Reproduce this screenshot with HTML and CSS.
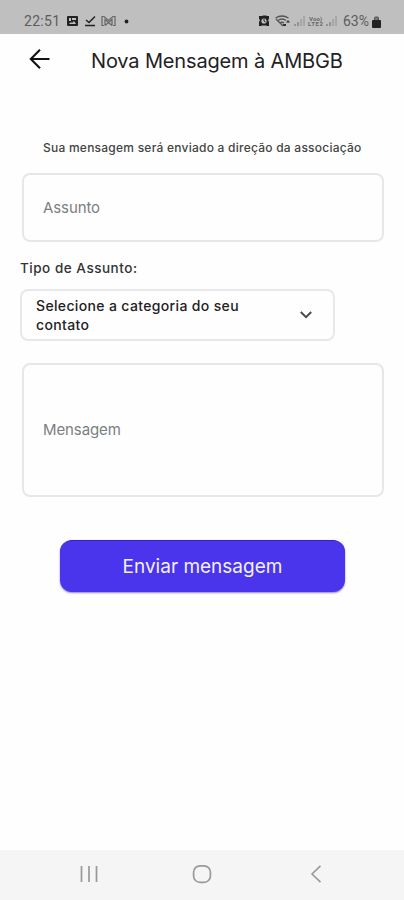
FILE: index.html
```
<!DOCTYPE html>
<html lang="pt-BR">
<head>
<meta charset="utf-8">
<title>Nova Mensagem à AMBGB</title>
<link rel="stylesheet" href="styles.css">
</head>
<body>
<div class="screen">
  <div class="status">
    <span class="clock">22:51</span>
    <svg class="notices" width="66" height="14" viewBox="0 0 66 14">
      <path fill="#222" fill-rule="evenodd" d="M2 2h9q1 0 1 1v8q0 1-1 1H2q-1 0-1-1V3q0-1 1-1zM3 4v3h2V4zM6 4v2h4V4zM3 10h7L8 7 6 9 5 8z"/>
      <path fill="none" stroke="#222" stroke-width="1.500" d="M20 6l3 2.500L29 2.500M19 11.500h10"/>
      <g fill="none" stroke="#666" stroke-width="1.200"><path d="M38 11.500H36V2.500h2l4.500 4L47 2.500h2v9h-2M39 11.500V5.500l3.500 3L46 5.500v6M39 11.500l3.500-3 3.500 3"/></g>
      <circle cx="60.500" cy="7.500" r="1.900" fill="#222"/>
    </svg>
    <svg class="signals" width="82" height="14" viewBox="0 0 82 14">
      <path fill="#222" d="M1 2h3l1-.5h3L9 2h2v3l-1 1 1 2v4H9l-1-.5H4L3 12H1V8l1-2-1-1z"/>
      <circle cx="6" cy="7" r="2.600" fill="#bfbfbf"/><path d="M6 5v2l1.500 1" stroke="#222" fill="none"/>
      <g fill="none" stroke="#555" stroke-width="1.300"><path d="M17.500 4Q24 0 30.500 4M20 6.500q4-3 8 0M22 9q2-1.500 4 0M18 5l7 7"/></g>
      <path fill="#333" d="M30 6l2 2.500h-4zM25 10h3v2h-3z"/>
      <path stroke="#888" stroke-width="1.600" d="M37 12v-2M40 12V8"/><path stroke="#a0a0a0" stroke-width="1.600" d="M43 12V5M46 12V2"/>
      <text x="51" y="6.500" class="lte" textLength="13">Voo)</text><text x="50" y="12" class="lte" textLength="15">LTE2</text>
      <path stroke="#888" stroke-width="1.600" d="M69 12v-2M72 12V8"/><path stroke="#a0a0a0" stroke-width="1.600" d="M75 12V5M78 12V2"/>
    </svg>
    <span class="percent">63%</span>
    <svg class="battery" width="9" height="13" viewBox="0 0 9 13"><path fill="#222" d="M1 5h7q1 0 1 1v6q0 1-1 1H1q-1 0-1-1V6q0-1 1-1z"/><path fill="#777" stroke="#555" d="M2.500 5V3q0-1 1-1h2q1 0 1 1v2"/></svg>
  </div>
  <header class="header">
    <svg class="back" width="22" height="22" viewBox="0 0 22 22"><path d="M20.500 11H2M11 1.800L1.800 11l9.200 9.200" fill="none" stroke="#111" stroke-width="2.100"/></svg>
    <h1 class="title">Nova Mensagem à AMBGB</h1>
  </header>
  <main class="form">
    <p class="hint">Sua mensagem será enviado a direção da associação</p>
    <div class="field subject">Assunto</div>
    <div class="label">Tipo de Assunto:</div>
    <div class="select">
      <div class="choice">Selecione a categoria do seu<br>contato</div>
      <svg width="14" height="10" viewBox="0 0 14 10"><path d="M1.800 2L7 7.200 12.200 2" fill="none" stroke="#4a4a4a" stroke-width="2"/></svg>
    </div>
    <div class="field message">Mensagem</div>
    <div class="button">Enviar mensagem</div>
  </main>
  <nav class="nav">
    <svg width="18" height="20" viewBox="0 0 18 20"><path d="M1.500 2v16M9 2v16M16.500 2v16" stroke="#999" stroke-width="1.700"/></svg>
    <svg class="home" width="20" height="20" viewBox="0 0 20 20"><rect x="1.600" y="1.800" width="16.800" height="16.600" rx="6.500" fill="none" stroke="#999" stroke-width="1.700"/></svg>
    <svg width="12" height="20" viewBox="0 0 12 20"><path d="M10.500 1.800L2 10l8.500 8.200" fill="none" stroke="#999" stroke-width="1.600"/></svg>
  </nav>
</div>
</body>
</html>
```
FILE: styles.css
```
* { box-sizing: border-box; }
body { margin: 0; background: #fff; font-family: Inter, "Open Sans", sans-serif; }
svg { display: block; flex: none; }
.screen { width: 404px; height: 900px; display: flex; flex-direction: column; background: #fefefe; overflow: hidden; }
.status { height: 34px; flex: none; background: #bfbfbf; display: flex; align-items: center; padding: 8px 23px 0 24px; color: #5c5c5c; font: 14px/16px Roboto, sans-serif; }
.clock { width: 42px; letter-spacing: 0.3px; }
.signals { margin-left: auto; }
.lte { font: bold 6px Roboto, sans-serif; fill: #666; }
.percent { width: 29px; margin-left: 3px; }
.header { height: 56px; flex: none; display: flex; align-items: flex-start; padding: 14px 0 0 29px; }
.title { margin: 0 0 0 40px; font-size: 20px; line-height: 26px; font-weight: 400; letter-spacing: -0.15px; color: #222; white-space: nowrap; }
.form { flex: 1; padding: 48px 20px 0; }
.hint { margin: 0 0 15px 23px; font-size: 12px; line-height: 20px; letter-spacing: 0.24px; color: #444; white-space: nowrap; font-weight: 500; }
.field { margin: 0 1px 0 2px; border: 2px solid #e6e7eb; border-radius: 8px; display: flex; align-items: center; padding-left: 19px; font-size: 15px; letter-spacing: -0.1px; color: #7b7f82; width: 362px; }
.subject { height: 69px; }
.label { margin-top: 16px; height: 20px; font-size: 13.500px; line-height: 20px; font-weight: 500; letter-spacing: 0.52px; color: #333; }
.select { margin-top: 11px; width: 315px; height: 52px; border: 2px solid #e6e8eb; border-radius: 8px; display: flex; align-items: center; justify-content: space-between; padding: 0 20px 0 14px; }
.choice { font-size: 14px; line-height: 19px; font-weight: 500; letter-spacing: 0.35px; color: #222; white-space: nowrap; padding-bottom: 1px; }
.message { margin-top: 22px; height: 134px; padding-bottom: 1px; }
.button { width: 285px; height: 52px; margin: 43px 0 0 40px; border-radius: 12px; background: #4a35ec; border-top: 1px solid #3522c9; box-shadow: 0 1px 2px #8b82dc; color: #f2f0ff; font-size: 19px; display: flex; align-items: center; justify-content: center; white-space: nowrap; }
.nav { height: 50px; flex: none; background: #f5f5f5; display: flex; align-items: center; padding: 0 0 2px 80px; gap: 98px; }
.home { margin-left: -4px; }
```
